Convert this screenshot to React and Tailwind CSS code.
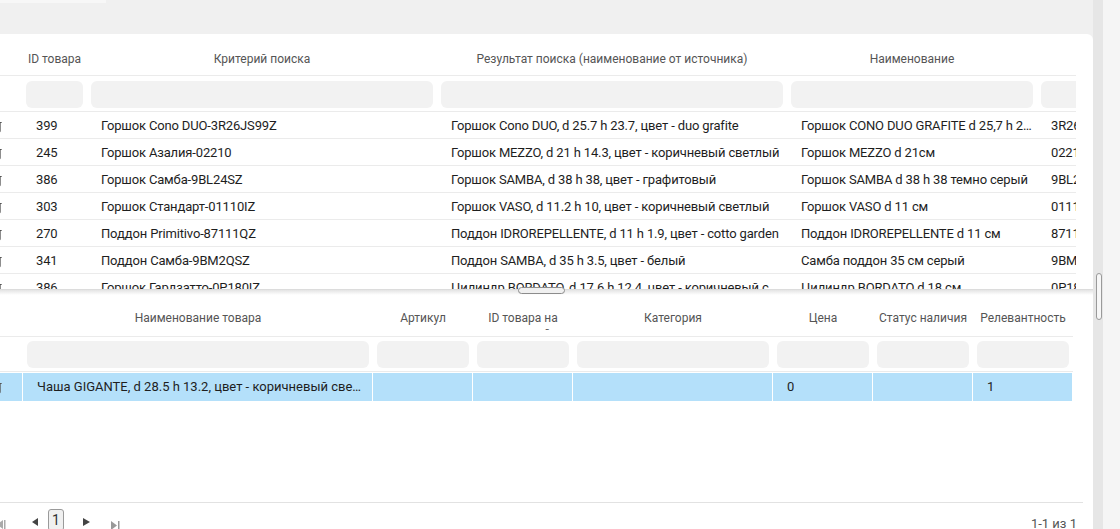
import React from "react";

const topCols = [
  { label: "ID товара", w: "w-[65px]" },
  { label: "Критерий поиска", w: "w-[350px]" },
  { label: "Результат поиска (наименование от источника)", w: "w-[350px]" },
  { label: "Наименование", w: "w-[250px]" },
  { label: "Артикул", w: "w-[150px]" },
];

const topRows = [
  ["399", "Горшок Cono DUO-3R26JS99Z", "Горшок Cono DUO, d 25.7 h 23.7, цвет - duo grafite", "Горшок CONO DUO GRAFITE d 25,7 h 23,7", "3R26JS99Z"],
  ["245", "Горшок Азалия-02210", "Горшок MEZZO, d 21 h 14.3, цвет - коричневый светлый", "Горшок MEZZO d 21см", "02210"],
  ["386", "Горшок Самба-9BL24SZ", "Горшок SAMBA, d 38 h 38, цвет - графитовый", "Горшок SAMBA d 38 h 38 темно серый", "9BL24SZ"],
  ["303", "Горшок Стандарт-01110IZ", "Горшок VASO, d 11.2 h 10, цвет - коричневый светлый", "Горшок VASO d 11 см", "01110IZ"],
  ["270", "Поддон Primitivo-87111QZ", "Поддон IDROREPELLENTE, d 11 h 1.9, цвет - cotto garden", "Поддон IDROREPELLENTE d 11 см", "87111QZ"],
  ["341", "Поддон Самба-9BM2QSZ", "Поддон SAMBA, d 35 h 3.5, цвет - белый", "Самба поддон 35 см серый", "9BM2QSZ"],
  ["386", "Горшок Гардзатто-0P180IZ", "Цилиндр BORDATO, d 17.6 h 12.4, цвет - коричневый светлый", "Цилиндр BORDATO d 18 см", "0P180IZ"],
];

const bottomCols = [
  { label: "Наименование товара", w: "w-[350px]" },
  { label: "Артикул", w: "w-[100px]" },
  { label: "ID товара на маркетплейсе", w: "w-[100px]" },
  { label: "Категория", w: "w-[200px]" },
  { label: "Цена", w: "w-[100px]" },
  { label: "Статус наличия", w: "w-[100px]" },
  { label: "Релевантность", w: "w-[100px]" },
];

const bottomRow = ["Чаша GIGANTE, d 28.5 h 13.2, цвет - коричневый светлый", "", "", "", "0", "", "1"];

function RowIcon() {
  return (
    <svg width="14" height="14" viewBox="0 0 24 24" fill="none" stroke="#555" strokeWidth="2" strokeLinecap="round" className="-ml-[11px] shrink-0">
      <path d="M3 6h18" />
      <path d="M19 6v14a2 2 0 0 1-2 2H7a2 2 0 0 1-2-2V6" />
      <path d="M8 6V4a2 2 0 0 1 2-2h4a2 2 0 0 1 2 2v2" />
    </svg>
  );
}

export default function App() {
  return (
    <div className="relative flex h-[529px] w-[1120px] overflow-hidden bg-[#f0f0f0] font-['Roboto',sans-serif]">
      <div className="flex w-[1093px] flex-col">
        <div className="h-[34px] shrink-0">
          <div className="h-[3px] w-[106px] bg-[#f7f7f7]" />
        </div>

        <div className="flex flex-1 flex-col rounded-tr-md bg-white">
          {/* top table */}
          <div className="h-[255px] w-[1076px] shrink-0 overflow-hidden">
            <div className="flex h-[42px] border-b border-[#ebebeb] pt-[8px] text-[12px] text-[#555]">
              <div className="w-[22px] shrink-0" />
              {topCols.map((c, i) => (
                <div key={i} className={`${c.w} flex shrink-0 items-center justify-center overflow-hidden whitespace-nowrap`}>
                  {c.label}
                </div>
              ))}
            </div>
            <div className="flex h-[36px] items-center border-b border-[#ebebeb]">
              <div className="w-[22px] shrink-0" />
              {topCols.map((c, i) => (
                <div key={i} className={`${c.w} shrink-0 px-[4px]`}>
                  <div className="mt-[1px] h-[27px] rounded-md bg-[#f2f2f2]" />
                </div>
              ))}
            </div>
            {topRows.map((r, ri) => (
              <div key={ri} className="flex h-[27px] items-center border-b border-[#ebebeb] pt-[2px] text-[13px] tracking-[-0.15px] text-[#1e1e1e]">
                <div className="flex w-[22px] shrink-0 items-center overflow-hidden">
                  <RowIcon />
                </div>
                {r.map((v, i) => (
                  <div key={i} className={`${topCols[i].w} shrink-0 truncate pl-[14px] pr-[4px]`}>
                    {v}
                  </div>
                ))}
              </div>
            ))}
          </div>

          {/* splitter */}
          <div className="relative h-[6px] shrink-0 border-t border-[#dcdcdc] bg-gradient-to-b from-[#e4e4e4] to-white">
            <div className="absolute left-[518px] top-[-3px] h-[7px] w-[47px] rounded-full border border-[#8c8c8c] bg-[#f0f0f0]" />
          </div>

          {/* bottom table */}
          <div className="flex flex-1 flex-col">
            <div className="w-[1073px]">
              <div className="flex h-[42px] border-b border-[#ebebeb] text-[12px] text-[#555]">
                <div className="w-[23px] shrink-0" />
                {bottomCols.map((c, i) => (
                  <div key={i} className={`${c.w} shrink-0 px-[6px] pt-[15px] text-center`}>
                    <div className="h-[20px] overflow-hidden leading-[16px]">{c.label}</div>
                  </div>
                ))}
              </div>
              <div className="flex h-[35px] items-center border-b border-[#ebebeb]">
                <div className="w-[23px] shrink-0" />
                {bottomCols.map((c, i) => (
                  <div key={i} className={`${c.w} shrink-0 px-[4px]`}>
                    <div className="h-[27px] rounded-md bg-[#f2f2f2]" />
                  </div>
                ))}
              </div>
              <div className="mt-[1px] flex h-[28px] items-center bg-[#b4e0fa] text-[13px] text-[#1e1e1e]">
                <div className="flex h-full w-[23px] shrink-0 items-center overflow-hidden border-r border-white">
                  <RowIcon />
                </div>
                {bottomRow.map((v, i) => (
                  <div key={i} className={`${bottomCols[i].w} flex h-full shrink-0 items-center border-r border-white pl-[14px] pr-[6px]`}>
                    <span className="truncate">{v}</span>
                  </div>
                ))}
              </div>
            </div>

            <div className="flex-1" />

            <div className="flex h-[27px] w-[1083px] shrink-0 items-start border-t border-[#e2e2e2] pt-[6px] text-[13px] text-[#555]">
              <div className="flex items-center">
                <svg width="10" height="9" viewBox="0 0 10 9" className="-ml-[4px] mt-[9px]">
                  <path d="M7 0v9L1 4.5z" fill="#aaa" />
                  <rect x="8" y="0" width="1.5" height="9" fill="#aaa" />
                </svg>
                <svg width="6" height="8" viewBox="0 0 6 8" className="ml-[26px] mt-[4px]">
                  <path d="M6 0v8L0 4z" fill="#444" />
                </svg>
                <div className="ml-[10px] flex h-[22px] w-[16px] items-center justify-center rounded-[3px] border border-[#9a9a9a] bg-[#f0f0f0] text-[14px] text-[#333]">
                  1
                </div>
                <svg width="7" height="8" viewBox="0 0 7 8" className="ml-[19px] mt-[3px]">
                  <path d="M0 0v8l7-4z" fill="#444" />
                </svg>
                <svg width="9" height="9" viewBox="0 0 9 9" className="ml-[21px] mt-[10px]">
                  <path d="M0 0v9l6-4.5z" fill="#999" />
                  <rect x="7" y="0" width="1.5" height="9" fill="#999" />
                </svg>
              </div>
              <div className="ml-auto mr-[6px] mt-[5px]">1-1 из 1</div>
            </div>
          </div>
        </div>
      </div>

      {/* outer scrollbar */}
      <div className="relative w-[10px] shrink-0 bg-[#e6e6e6]">
        <div className="absolute left-[3px] top-[273px] h-[47px] w-[6px] rounded-[3px] border border-[#9a9a9a] bg-[#f7f7f7]" />
      </div>
      <div className="flex-1 bg-[#f5f5f5]" />
    </div>
  );
}
